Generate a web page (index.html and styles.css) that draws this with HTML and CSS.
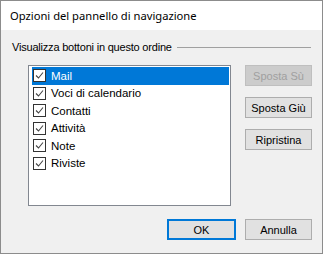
FILE: index.html
```html
<!DOCTYPE html>
<html lang="it">
<head>
    <meta charset="UTF-8">
    <title>Opzioni del pannello di navigazione</title>
    <link rel="stylesheet" href="styles.css">
</head>
<body>
    <div class="window">
        <div class="titlebar">Opzioni del pannello di navigazione</div>

        <div class="content">
            <div class="group-head">
                <span class="group-label">Visualizza bottoni in questo ordine</span>
                <span class="group-line"></span>
            </div>

            <div class="middle">
                <ul class="list">
                    <li class="row selected"><span class="check"><svg viewBox="0 0 11 11"><path d="M2 5.5 L4.5 8 L9 2.5"/></svg></span>Mail</li>
                    <li class="row"><span class="check"><svg viewBox="0 0 11 11"><path d="M2 5.5 L4.5 8 L9 2.5"/></svg></span>Voci di calendario</li>
                    <li class="row"><span class="check"><svg viewBox="0 0 11 11"><path d="M2 5.5 L4.5 8 L9 2.5"/></svg></span>Contatti</li>
                    <li class="row"><span class="check"><svg viewBox="0 0 11 11"><path d="M2 5.5 L4.5 8 L9 2.5"/></svg></span>Attività</li>
                    <li class="row"><span class="check"><svg viewBox="0 0 11 11"><path d="M2 5.5 L4.5 8 L9 2.5"/></svg></span>Note</li>
                    <li class="row"><span class="check"><svg viewBox="0 0 11 11"><path d="M2 5.5 L4.5 8 L9 2.5"/></svg></span>Riviste</li>
                </ul>

                <div class="side-buttons">
                    <button class="btn" disabled>Sposta Sù</button>
                    <button class="btn">Sposta Giù</button>
                    <button class="btn">Ripristina</button>
                </div>
            </div>

            <div class="footer">
                <button class="btn default">OK</button>
                <button class="btn">Annulla</button>
            </div>
        </div>
    </div>
</body>
</html>
```

FILE: styles.css
```css
body {
    margin: 0;
    background: #ffffff;
    font-family: "Liberation Sans", Arial, sans-serif;
    font-size: 12px;
    color: #000;
}
.window {
    width: 321px;
    height: 252px;
    border: 1px solid #8c8c8c;
    background: #f0f0f0;
    display: flex;
    flex-direction: column;
}
.titlebar {
    height: 29px;
    background: #fff;
    padding-left: 9px;
    line-height: 30px;
    font-family: "Noto Sans", sans-serif;
    font-size: 11.2px;
}
.content {
    flex: 1;
    padding: 9px 10px 0 11px;
    display: flex;
    flex-direction: column;
}
.group-head {
    display: flex;
    align-items: center;
    height: 16px;
}
.group-label {
    font-size: 11px;
    letter-spacing: -0.2px;
}
.group-line {
    flex: 1;
    height: 1px;
    background: #a0a0a0;
    margin: 1px 1px 0 5px;
}
.middle {
    display: flex;
    align-items: flex-start;
    margin-top: 10px;
}
.list {
    list-style: none;
    margin: 0 0 0 16px;
    padding: 1px 1px 1px 3px;
    width: 197px;
    height: 137px;
    background: #fff;
    border: 1px solid #828790;
    font-size: 11.5px;
}
.row {
    height: 17.5px;
    display: flex;
    align-items: center;
    padding-left: 1px;
}
.row.selected {
    background: #0078d7;
    color: #fff;
}
.check {
    width: 11px;
    height: 11px;
    border: 1px solid #333;
    background: #fff;
    margin-right: 5px;
    display: flex;
}
.check svg {
    width: 11px;
    height: 11px;
    fill: none;
    stroke: #444;
    stroke-width: 1.1;
}
.side-buttons {
    display: flex;
    flex-direction: column;
    gap: 11px;
    margin-left: 14px;
}
.btn {
    width: 67px;
    height: 21px;
    padding: 0;
    font-family: "Liberation Sans", Arial, sans-serif;
    font-size: 11px;
    color: #000;
    background: #e1e1e1;
    border: 1px solid #adadad;
    border-radius: 0;
}
.btn:disabled {
    background: #cccccc;
    border-color: #bfbfbf;
    color: #a0a0a0;
}
.btn.default {
    width: 69px;
    border: 2px solid #0078d7;
}
.footer {
    display: flex;
    justify-content: flex-end;
    gap: 9px;
    margin-top: 13px;
}
```
